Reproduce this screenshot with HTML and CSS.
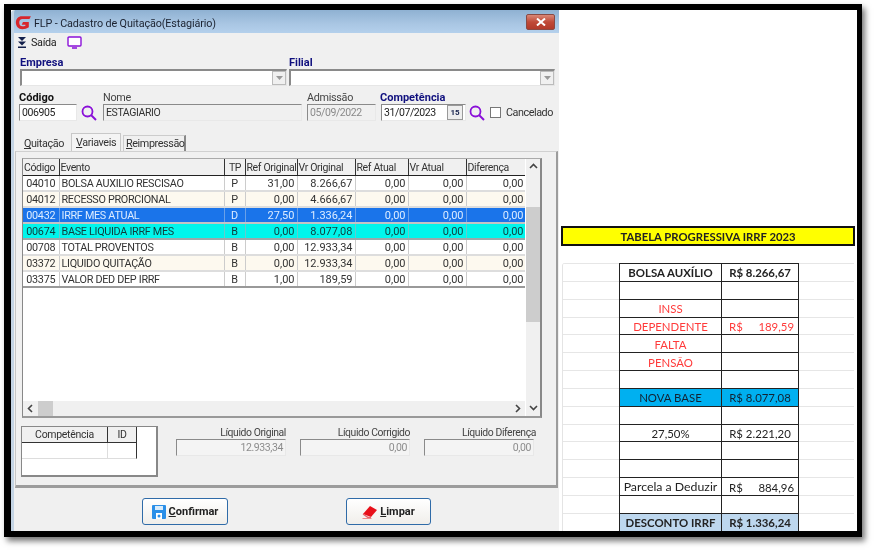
FILE: index.html
```html
<!DOCTYPE html>
<html lang="pt-BR">
<head>
<meta charset="utf-8">
<title>FLP - Cadastro de Quitação(Estagiário)</title>
<link rel="stylesheet" href="styles.css">
</head>
<body>
<div class="frame">
  <section class="window">
    <header class="titlebar">
      <svg class="logo" viewBox="0 0 16 14" width="17" height="15"><path d="M15 1H6.500C3 1 .8 3.500 .8 7s2.400 6.300 6 6.300c2.400 0 4.500-.7 6.200-1.800V6.500H7.500L6.300 9h3.500v1c-.9.500-1.800.6-2.800.6C5 10.600 4 9 4 7s1-3.300 3-3.300h6.600z" fill="#d8262c"/></svg>
      <span class="title-text">FLP - Cadastro de Quitação(Estagiário)</span>
      <span class="close"><svg viewBox="0 0 10 8" width="10" height="8"><path d="M1 .5l8 7M9 .5l-8 7" stroke="#fff" stroke-width="2"/></svg></span>
    </header>
    <div class="toolbar">
      <svg viewBox="0 0 10 12" width="10" height="12"><path d="M1 0h8L5 4zM1 4.500h8L5 8.500zM1 9.500h8V11H1z" fill="#14204c"/></svg>
      <span class="tool-label">Saída</span>
      <svg class="monitor" viewBox="0 0 15 13" width="15" height="13"><path d="M2 1h11a1 1 0 0 1 1 1v7a1 1 0 0 1-1 1H2a1 1 0 0 1-1-1V2a1 1 0 0 1 1-1z" fill="#fff" stroke="#8a10d8" stroke-width="1.400"/><path d="M5 12h5" stroke="#8a10d8" stroke-width="1.400"/></svg>
    </div>
    <div class="row-combos">
      <div class="field combo-a"><label class="label-blue">Empresa</label><div class="combo"><span class="combo-btn"><svg viewBox="0 0 7 4" width="7" height="4"><path d="M0 0h7L3.500 4z" fill="#999"/></svg></span></div></div>
      <div class="field combo-b"><label class="label-blue">Filial</label><div class="combo"><span class="combo-btn"><svg viewBox="0 0 7 4" width="7" height="4"><path d="M0 0h7L3.500 4z" fill="#999"/></svg></span></div></div>
    </div>
    <div class="row-code">
      <div class="field f-code"><label class="label-bold">Código</label><div class="input">006905</div></div>
      <svg class="search s-code" viewBox="0 0 16 16" width="16" height="16"><circle cx="6.500" cy="6.500" r="5" fill="none" stroke="#8a10d8" stroke-width="1.800"/><path d="M10 10l5 5" stroke="#8a10d8" stroke-width="2"/></svg>
      <div class="field f-name"><label class="label-plain">Nome</label><div class="input readonly dark">ESTAGIARIO</div></div>
      <div class="field f-adm"><label class="label-plain">Admissão</label><div class="input readonly">05/09/2022</div></div>
      <div class="field f-comp"><label class="label-comp">Competência</label><div class="input date">31/07/2023<span class="cal">15</span></div></div>
      <svg class="search s-comp" viewBox="0 0 16 16" width="16" height="16"><circle cx="6.500" cy="6.500" r="5" fill="none" stroke="#8a10d8" stroke-width="1.800"/><path d="M10 10l5 5" stroke="#8a10d8" stroke-width="2"/></svg>
      <div class="check-wrap"><span class="check"></span><span>Cancelado</span></div>
    </div>
    <nav class="tabs">
      <span class="tab t-1"><u>Q</u>uitação</span>
      <span class="tab t-2 active"><u>V</u>ariaveis</span>
      <span class="tab t-3"><u>R</u>eimpressão</span>
    </nav>
    <div class="panel">
      <div class="grid">
        <div class="grid-body">
          <table class="events">
            <colgroup><col class="c1"><col class="c2"><col class="c3"><col class="c4"><col class="c5"><col class="c6"><col class="c7"><col class="c8"></colgroup>
            <thead><tr><th>Código</th><th>Evento</th><th class="ctr">TP</th><th>Ref Original</th><th>Vr Original</th><th>Ref Atual</th><th>Vr Atual</th><th>Diferença</th></tr></thead>
            <tbody>
              <tr><td class="ctr">04010</td><td>BOLSA AUXILIO RESCISAO</td><td class="ctr">P</td><td class="num">31,00</td><td class="num">8.266,67</td><td class="num">0,00</td><td class="num">0,00</td><td class="num">0,00</td></tr>
              <tr class="alt"><td class="ctr">04012</td><td>RECESSO PRORCIONAL</td><td class="ctr">P</td><td class="num">0,00</td><td class="num">4.666,67</td><td class="num">0,00</td><td class="num">0,00</td><td class="num">0,00</td></tr>
              <tr class="sel"><td class="ctr">00432</td><td>IRRF MES ATUAL</td><td class="ctr">D</td><td class="num">27,50</td><td class="num">1.336,24</td><td class="num">0,00</td><td class="num">0,00</td><td class="num">0,00</td></tr>
              <tr class="cyan"><td class="ctr">00674</td><td>BASE LIQUIDA IRRF MES</td><td class="ctr">B</td><td class="num">0,00</td><td class="num">8.077,08</td><td class="num">0,00</td><td class="num">0,00</td><td class="num">0,00</td></tr>
              <tr><td class="ctr">00708</td><td>TOTAL PROVENTOS</td><td class="ctr">B</td><td class="num">0,00</td><td class="num">12.933,34</td><td class="num">0,00</td><td class="num">0,00</td><td class="num">0,00</td></tr>
              <tr class="alt"><td class="ctr">03372</td><td>LIQUIDO QUITAÇÃO</td><td class="ctr">B</td><td class="num">0,00</td><td class="num">12.933,34</td><td class="num">0,00</td><td class="num">0,00</td><td class="num">0,00</td></tr>
              <tr><td class="ctr">03375</td><td>VALOR DED DEP IRRF</td><td class="ctr">B</td><td class="num">1,00</td><td class="num">189,59</td><td class="num">0,00</td><td class="num">0,00</td><td class="num">0,00</td></tr>
            </tbody>
          </table>
        </div>
        <div class="vscroll">
          <svg viewBox="0 0 15 16" width="15" height="16"><path d="M4 9l3.500-3.500L11 9" fill="none" stroke="#444" stroke-width="1.600"/></svg>
          <div class="vthumb"></div>
          <div class="spacer"></div>
          <svg viewBox="0 0 15 16" width="15" height="16"><path d="M4 6l3.500 3.500L11 6" fill="none" stroke="#444" stroke-width="1.600"/></svg>
        </div>
        <div class="hscroll">
          <svg viewBox="0 0 15 15" width="15" height="15"><path d="M9 4L5.500 7.500 9 11" fill="none" stroke="#444" stroke-width="1.600"/></svg>
          <div class="hthumb"></div>
          <div class="spacer"></div>
          <svg viewBox="0 0 15 15" width="15" height="15"><path d="M6 4l3.500 3.500L6 11" fill="none" stroke="#444" stroke-width="1.600"/></svg>
        </div>
      </div>
      <div class="bottom">
        <div class="mini">
          <div class="mini-grid">
            <span class="mh">Competência</span><span class="mh mh2">ID</span>
            <span class="mc"></span><span class="mc mc2"></span>
          </div>
        </div>
        <div class="liquid"><label>Líquido Original</label><div class="input amount">12.933,34</div></div>
        <div class="liquid"><label>Líquido Corrigido</label><div class="input amount">0,00</div></div>
        <div class="liquid wide"><label>Líquido Diferença</label><div class="input amount">0,00</div></div>
      </div>
    </div>
    <footer class="footer">
      <button class="btn btn-save"><svg viewBox="0 0 14 14" width="14" height="14"><path d="M1 0h12a1 1 0 0 1 1 1v12a1 1 0 0 1-1 1H1a1 1 0 0 1-1-1V1a1 1 0 0 1 1-1z" fill="#2a8fe8"/><path d="M3 1h8v4H3z" fill="#d9ecfb"/><rect x="4" y="8" width="6" height="6" fill="#fff"/><circle cx="7" cy="11" r="1.500" fill="#2a8fe8"/></svg><span><u>C</u>onfirmar</span></button>
      <button class="btn btn-clear"><svg viewBox="0 0 16 14" width="16" height="14"><path d="M1 9L8 1l7 4-6 7z" fill="#e8101a"/><path d="M1 9l5 3.500h3" fill="none" stroke="#e8606a" stroke-width="1.400"/><path d="M.500 13.500h9" stroke="#ee8a8a"/></svg><span><u>L</u>impar</span></button>
    </footer>
  </section>
  <section class="sheet">
    <h1 class="sheet-title">TABELA PROGRESSIVA IRRF 2023</h1>
    <div class="paper">
      <table class="calc">
        <colgroup><col class="k"><col class="v"></colgroup>
        <tr class="bold"><td>BOLSA AUXÍLIO</td><td>R$ 8.266,67</td></tr>
        <tr><td></td><td></td></tr>
        <tr class="red"><td>INSS</td><td></td></tr>
        <tr class="red"><td>DEPENDENTE</td><td><span class="acc"><span>R$</span><span>189,59</span></span></td></tr>
        <tr class="red"><td>FALTA</td><td></td></tr>
        <tr class="red"><td>PENSÃO</td><td></td></tr>
        <tr><td></td><td></td></tr>
        <tr class="base"><td>NOVA BASE</td><td>R$ 8.077,08</td></tr>
        <tr><td></td><td></td></tr>
        <tr><td>27,50%</td><td>R$ 2.221,20</td></tr>
        <tr><td></td><td></td></tr>
        <tr><td></td><td></td></tr>
        <tr><td class="parcela">Parcela a Deduzir</td><td><span class="acc"><span>R$</span><span>884,96</span></span></td></tr>
        <tr><td></td><td></td></tr>
        <tr class="bold total"><td>DESCONTO IRRF</td><td>R$ 1.336,24</td></tr>
      </table>
    </div>
  </section>
</div>
</body>
</html>
```

FILE: styles.css
```css
* { box-sizing: border-box; }
html, body { margin: 0; padding: 0; background: #fff; }
body { width: 875px; height: 550px; overflow: hidden; font: 10.800px Roboto, sans-serif; letter-spacing: -.3px; color: #222; }
.frame { width: 858px; height: 533px; margin: 4px 0 0 4px; border: solid #000; border-width: 6px 5px 6px 7px; display: flex; box-shadow: 3px 4px 6px rgba(0,0,0,.55); background: #fff; }
.window { width: 548px; height: 521px; flex: none; background: #f0f0f0; display: flex; flex-direction: column; filter: blur(.3px); border-left: 3px solid #c4d4e4; border-top-left-radius: 4px; overflow: hidden; }
.titlebar { height: 23px; flex: none; display: flex; align-items: center; padding: 0 4px 0 2px; background: linear-gradient(#8fb1d2, #a9c6e3 60%, #b4d0ec); gap: 2px; color: #1b2230; font-size: 10.800px; letter-spacing: -.12px; margin-left: -1px; }
.logo { margin-top: 2px; flex: none; }
.title-text { flex: 1; padding-top: 3px; }
.close { width: 29px; height: 16px; border: 1px solid #8a4a44; border-radius: 2px; background: linear-gradient(#d98878, #c04a38 50%, #b23a2a); display: flex; align-items: center; justify-content: center; }
.toolbar { height: 19px; flex: none; display: flex; align-items: center; padding-left: 3px; gap: 4px; }
.tool-label { margin-right: 7px; }
.row-combos { display: flex; gap: 2px; padding: 4px 0 0 6px; flex: none; }
.field { display: flex; flex-direction: column; }
.combo-a { width: 267px; }
.combo-b { width: 266px; }
.label-blue, .label-comp { color: #10107e; font-size: 11px; font-weight: 700; letter-spacing: 0; height: 13px; line-height: 14px; }
.label-comp { margin-left: -1px; white-space: nowrap; }
.label-bold { font-size: 11px; font-weight: 700; letter-spacing: 0; height: 13px; line-height: 14px; color: #111; }
.label-plain { height: 13px; line-height: 14px; color: #444; }
.combo { height: 17px; background: #fff; border: solid; border-width: 2px 1px 1px 2px; border-color: #8a8a8a #e6e6e6 #e6e6e6 #8a8a8a; display: flex; justify-content: flex-end; }
.combo-btn { width: 14px; background: #f0f0f0; border: 1px solid #bbb; display: flex; align-items: center; justify-content: center; }
.row-code { display: flex; align-items: flex-start; padding: 5px 0 0 5px; flex: none; }
.input { height: 17px; line-height: 15px; padding-left: 2px; background: #fff; border: 1px solid; border-color: #8a8a8a #e8e8e8 #e8e8e8 #8a8a8a; white-space: nowrap; font-size: 10.500px; letter-spacing: -.4px; }
.readonly { background: #f0f0f0; color: #8a8a8a; }
.dark { color: #333; }
.f-code { width: 58px; }
.search { flex: none; margin-top: 14px; }
.s-code { margin-left: 4px; margin-right: 6px; }
.f-name { width: 199px; }
.f-adm { width: 69px; margin-left: 5px; }
.f-comp { width: 85px; margin-left: 5px; }
.date { display: flex; justify-content: space-between; padding-right: 2px; }
.cal { width: 16px; height: 15px; font-size: 8px; line-height: 13px; letter-spacing: 0; text-align: center; border: 1px solid #999; background: #eee; color: #14204c; font-weight: 700; }
.s-comp { margin-left: 3px; }
.check-wrap { display: flex; align-items: center; gap: 5px; margin: 15px 0 0 5px; color: #333; letter-spacing: -.45px; }
.check { width: 11px; height: 11px; background: #fff; border: 1px solid #777; }
.tabs { height: 19px; margin-top: 11px; padding-left: 9px; display: flex; align-items: flex-end; flex: none; letter-spacing: -.4px; }
.tab { height: 15px; line-height: 16px; padding: 0 3px; color: #333; }
.t-1 { width: 41px; margin-right: 7px; padding-left: 1px; white-space: nowrap; }
.t-2 { width: 50px; height: 18px; line-height: 18px; background: #f4f4f4; border: 1px solid #c8c8c8; border-bottom: 0; margin-right: 2px; padding-left: 4px; }
.t-3 { width: 63px; height: 16px; border-right: 2px solid #888; border-top: 1px solid #ccc; border-left: 1px solid #ccc; white-space: nowrap; padding-left: 2px; }
.panel { width: 543px; height: 337px; margin-left: 1px; flex: none; border: 1px solid #c6c6c6; border-width: 1px 2px 3px 1px; border-color: #d0d0d0 #9c9c9c #9c9c9c #c6c6c6; padding: 6px 0 0 6px; display: flex; flex-direction: column; }
.grid { width: 520px; height: 260px; flex: none; display: grid; grid-template-columns: 1fr 15px; grid-template-rows: 1fr 15px; background: #fff; border: solid; border-width: 1px 2px 2px 1px; border-color: #aaa #888 #999 #888; }
.grid-body { overflow: hidden; }
.events { border-collapse: collapse; table-layout: fixed; width: 503px; }
.c1 { width: 36px; } .c2 { width: 165px; } .c3 { width: 21px; } .c4 { width: 52px; } .c5 { width: 58px; } .c6 { width: 53px; } .c7 { width: 58px; } .c8 { width: 60px; }
.events th { height: 16px; padding: 1px 0 0 1px; line-height: 13px; font-weight: 400; text-align: left; background: #f0f0f0; border-right: 1px solid #333; border-bottom: 1px solid #222; white-space: nowrap; overflow: hidden; color: #333; font-size: 10.500px; letter-spacing: -.35px; }
.events td { height: 16px; padding: 2px 2px 0; border-right: 1px solid #ccc; border-bottom: 2px solid #ddd; white-space: nowrap; overflow: hidden; color: #333; line-height: 12px; }
.events .ctr { text-align: center; }
.events .num { text-align: right; font-size: 11px; letter-spacing: 0; }
.alt td { background: #fdf9ef; }
.sel td { background: #1a74ea; color: #dcecff; border-bottom-color: #c4c4c4; border-right-color: #6aa0e8; }
.cyan td { background: #00f6ec; color: #103c3c; border-bottom-color: #9aa; border-right-color: #66cccc; }
.events tbody tr:last-child td { border-bottom-color: #999; }
.vscroll { grid-row: 1 / 3; grid-column: 2; background: #f0f0f0; display: flex; flex-direction: column; margin-left: 1px; }
.vscroll svg, .hscroll svg { flex: none; }
.vthumb { width: 14px; height: 115px; margin-top: 32px; background: #cdcdcd; flex: none; }
.spacer { flex: 1; }
.hscroll { background: #f0f0f0; display: flex; align-items: center; }
.hthumb { width: 15px; height: 15px; background: #cdcdcd; }
.bottom { display: flex; align-items: flex-start; margin: 8px 0 0 -1px; }
.mini { width: 137px; height: 51px; border: 1px solid #888; border-width: 1px 2px 2px 1px; flex: none; margin-right: 18px; background: #fff; }
.mini-grid { display: grid; grid-template-columns: 86px 29px; width: 115px; }
.mh { height: 16px; line-height: 15px; text-align: center; background: #f0f0f0; border-right: 1px solid #333; border-bottom: 1px solid #333; color: #333; font-size: 10.500px; }
.mc { height: 16px; border-right: 1px solid #ddd; border-bottom: 1px solid #ddd; }
.mh2, .mc2 { border-right-color: #333; }
.liquid { width: 110px; margin-right: 14px; flex: none; color: #444; }
.liquid label { display: block; height: 13px; line-height: 14px; text-align: right; white-space: nowrap; font-size: 10.400px; letter-spacing: -.4px; }
.wide label { margin-right: -2px; }
.amount { text-align: right; padding-right: 2px; color: #8c8c8c; background: #f4f4f4; height: 17px; }
.footer { flex: 1; display: flex; align-items: flex-start; padding: 10px 0 0 128px; }
.btn { width: 86px; height: 27px; padding: 0; border: 1px solid #2f6ba8; border-radius: 3px; background: linear-gradient(#fff, #f0eeea); display: flex; align-items: center; justify-content: center; gap: 3px; font: 700 11px Roboto, sans-serif; letter-spacing: 0; color: #222; }
.btn-save { margin-right: 118px; }
.btn-clear { width: 85px; gap: 2px; }
.sheet { flex: 1; min-width: 0; overflow: hidden; background: #fff; padding: 216px 0 0 2px; font-family: Lato, sans-serif; letter-spacing: 0; filter: blur(.25px); }
.sheet-title { width: 294px; height: 20px; margin: 0 0 17px; border: 2px solid #111; background: #ff0; font: 700 11.300px/17px Lato, sans-serif; text-align: center; color: #222; }
.paper { height: 300px; margin-left: 1px; margin-right: 3px; padding-left: 56px; border-left: 1px solid #e4e4e4; border-top-left-radius: 3px; background: repeating-linear-gradient(#e6e6e6 0 1px, #fff 1px 17.850px); overflow: hidden; }
.calc { border-collapse: collapse; table-layout: fixed; width: 179px; }
.k { width: 102px; } .v { width: 77px; }
.calc td { height: 17.850px; padding: 1px 3px 0; border: 1px solid #222; font-size: 11.400px; line-height: 15px; text-align: center; color: #222; background: #fff; white-space: nowrap; overflow: hidden; }
.calc td.parcela { font-size: 12.300px; padding: 0; }
.calc tr.bold td { font-weight: 700; }
.calc .red td { color: #ff3a3a; }
.calc .base td { background: #00b0f0; color: #123; }
.calc .total td { background: #bdd7ee; }
.acc { display: flex; justify-content: space-between; padding: 0 1px 0 4px; }
```
